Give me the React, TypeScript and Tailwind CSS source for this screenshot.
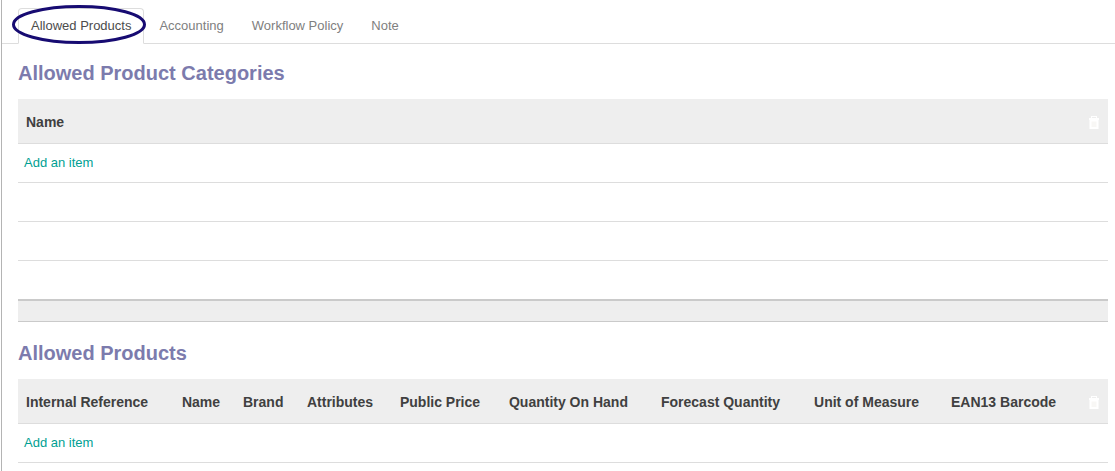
import { useState } from "react";

const tabs = ["Allowed Products", "Accounting", "Workflow Policy", "Note"];

const productColumns = [
  { label: "Internal Reference", width: "w-[14.31%]" },
  { label: "Name", width: "w-[5.6%]" },
  { label: "Brand", width: "w-[5.87%]" },
  { label: "Attributes", width: "w-[8.53%]" },
  { label: "Public Price", width: "w-[10%]" },
  { label: "Quantity On Hand", width: "w-[13.95%]" },
  { label: "Forecast Quantity", width: "w-[14.04%]" },
  { label: "Unit of Measure", width: "w-[12.57%]" },
  { label: "EAN13 Barcode", width: "w-auto" },
];

const categoryColumns = [{ label: "Name", width: "w-auto" }];

function TrashIcon() {
  return (
    <svg width="10" height="14" viewBox="0 0 10 14" className="block" aria-hidden="true">
      <path
        fillRule="evenodd"
        fill="#ffffff"
        d="M2 1H8V3H10V5H9.5V14H0.5V5H0V3H2ZM3 2H7V3H3Z"
      />
      <path fill="#f8f7f5" d="M2.5 6.5H7.5V12H2.5Z" />
    </svg>
  );
}

type Column = { label: string; width: string };

function ItemTable({
  title,
  columns,
  emptyRows,
  footer,
}: {
  title: string;
  columns: Column[];
  emptyRows: number;
  footer: boolean;
}) {
  const span = columns.length + 1;
  return (
    <section>
      <h2 className="mb-3.5 text-[20px] leading-6 font-bold text-[#7c7bad]">{title}</h2>
      <table aria-label={title} className="w-full table-fixed border-separate border-spacing-0">
        <thead>
          <tr className="h-[45px] bg-[#eeeeee]">
            {columns.map((c) => (
              <th
                key={c.label}
                scope="col"
                className={`${c.width} border-b border-[#dddddd] px-2 pt-0.5 pb-0 text-left text-[14px] leading-5 font-bold whitespace-nowrap text-[#404040]`}
              >
                {c.label}
              </th>
            ))}
            <td className="w-7 border-b border-[#dddddd] pt-0.5 pr-2 pb-0 pl-[9px]">
              <TrashIcon />
            </td>
          </tr>
        </thead>
        <tbody>
          <tr className="h-[39px]">
            <td colSpan={span} className="border-b border-[#dddddd] px-1.5 py-0">
              <a href="#add" className="text-[#009f93]">
                Add an item
              </a>
            </td>
          </tr>
          {Array.from({ length: emptyRows }, (_, i) => (
            <tr key={i} className={i === emptyRows - 1 ? "h-[38px]" : "h-[39px]"}>
              <td
                colSpan={span}
                className={i === emptyRows - 1 ? "p-0" : "border-b border-[#dddddd] p-0"}
              />
            </tr>
          ))}
        </tbody>
        {footer && (
          <tfoot>
            <tr className="h-[23px] bg-[#eeeeee]">
              <td colSpan={span} className="border-t-2 border-b border-[#cacaca] p-0" />
            </tr>
          </tfoot>
        )}
      </table>
    </section>
  );
}

export default function App() {
  const [active, setActive] = useState(0);
  return (
    <div className="min-h-screen bg-white pl-px font-['Liberation_Sans',Arial,sans-serif] text-[13px] leading-[18px] text-[#4c4c4c]">
      <div className="min-h-screen border-l border-[#b4b4b4]">
        <div role="tablist" className="flex gap-0.5 border-b border-[#dddddd] pt-2 pl-4">
          {tabs.map((tab, i) => (
            <button
              key={tab}
              type="button"
              role="tab"
              aria-selected={active === i}
              onClick={() => setActive(i)}
              className={
                active === i
                  ? "relative -mb-px rounded-t-[4px] border border-[#dddddd] border-b-white bg-white px-3 py-2 text-[#4c4c4c]"
                  : "relative -mb-px border border-transparent px-3 py-2 text-[#808080]"
              }
            >
              {tab}
              {i === 0 && (
                <svg
                  className="pointer-events-none absolute -top-1 -left-[7px] h-[39px] w-[134px]"
                  viewBox="0 0 134 39"
                  aria-hidden="true"
                >
                  <ellipse cx="67" cy="19.5" rx="65.5" ry="18" fill="none" stroke="#170b72" strokeWidth="3" />
                </svg>
              )}
            </button>
          ))}
        </div>
        <div className="flex flex-col gap-[19px] pt-[17px] pr-[7px] pl-4">
          <ItemTable title="Allowed Product Categories" columns={categoryColumns} emptyRows={3} footer />
          <ItemTable title="Allowed Products" columns={productColumns} emptyRows={0} footer={false} />
        </div>
      </div>
    </div>
  );
}
